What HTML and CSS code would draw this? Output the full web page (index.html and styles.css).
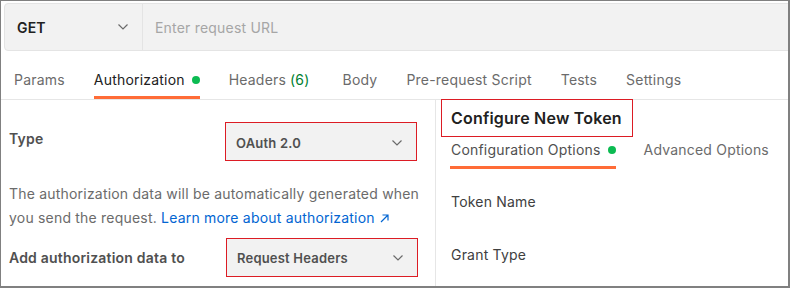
FILE: index.html
```html
<!DOCTYPE html>
<html lang="en">
<head>
  <meta charset="UTF-8" />
  <meta name="viewport" content="width=device-width, initial-scale=1.0"/>
  <title>Request | Authorization</title>
  <link rel="stylesheet" href="styles.css">
</head>
<body>

<div class="frame">
  <div class="url-bar">
    <div class="method">
      <span>GET</span>
      <svg class="chevron" width="10" height="6" viewBox="0 0 10 6"><path d="M0.5 0.5l4.5 4.5 4.5-4.5" fill="none" stroke="#6b6b6b" stroke-width="1.2"/></svg>
    </div>
    <div class="url">Enter request URL</div>
  </div>

  <nav class="tabs">
    <a class="tab">Params</a>
    <a class="tab active">Authorization <span class="dot"></span></a>
    <a class="tab">Headers <span class="count">(6)</span></a>
    <a class="tab">Body</a>
    <a class="tab">Pre-request Script</a>
    <a class="tab">Tests</a>
    <a class="tab">Settings</a>
  </nav>

  <div class="panels">
    <section class="auth">
      <div class="row row-type">
        <label class="label">Type</label>
        <div class="select">
          <span>OAuth 2.0</span>
          <svg class="chevron" width="10" height="6" viewBox="0 0 10 6"><path d="M0.5 0.5l4.5 4.5 4.5-4.5" fill="none" stroke="#6b6b6b" stroke-width="1.2"/></svg>
        </div>
      </div>

      <p class="note">The authorization data will be automatically generated when you send the request. <a class="learn">Learn more about authorization<svg width="9" height="9" viewBox="0 0 9 9"><path d="M1 8L8 1M2.5 1H8v5.5" fill="none" stroke="#0265d2" stroke-width="1.2"/></svg></a></p>

      <div class="row row-add">
        <label class="label">Add authorization data to</label>
        <div class="select select-add">
          <span>Request Headers</span>
          <svg class="chevron" width="10" height="6" viewBox="0 0 10 6"><path d="M0.5 0.5l4.5 4.5 4.5-4.5" fill="none" stroke="#6b6b6b" stroke-width="1.2"/></svg>
        </div>
      </div>
    </section>

    <section class="token">
      <h2 class="token-title">Configure New Token</h2>
      <div class="subtabs">
        <a class="subtab active">Configuration Options <span class="dot"></span></a>
        <a class="subtab">Advanced Options</a>
      </div>
      <div class="fields">
        <div class="field">Token Name</div>
        <div class="field">Grant Type</div>
      </div>
    </section>
  </div>
</div>

</body>
</html>
```

FILE: styles.css
```css
body {
  margin: 0;
  font-family: Inter, 'Noto Sans', sans-serif;
  font-size: 14px;
  letter-spacing: 0.2px;
  color: #212121;
  background-color: #fff;
}

.frame {
  width: 790px;
  height: 288px;
  box-sizing: border-box;
  border: 1px solid #808080;
  border-right-width: 2px;
  border-bottom-width: 2px;
  overflow: hidden;
}

/* request url bar */
.url-bar {
  display: flex;
  height: 48px;
  box-sizing: border-box;
  margin: 2px -10px 0 3px;
  background-color: #f2f2f2;
  border: 1px solid #e4e4e4;
  border-radius: 4px;
}

.method {
  width: 138px;
  box-sizing: border-box;
  display: flex;
  align-items: center;
  justify-content: space-between;
  padding: 0 14px 0 12px;
  border-right: 1px solid #e4e4e4;
  font-weight: 600;
}

.url {
  display: flex;
  align-items: center;
  padding-left: 12px;
  color: #a6a6a6;
}

/* request tabs */
.tabs {
  display: flex;
  gap: 29px;
  height: 49px;
  box-sizing: border-box;
  padding-left: 13px;
  border-bottom: 1px solid #e6e6e6;
}

.tab {
  display: flex;
  align-items: center;
  padding: 19px 0 6px;
  height: 20px;
  line-height: 20px;
  border-bottom: 3px solid transparent;
  color: #6b6b6b;
}

.tab.active {
  color: #212121;
  border-bottom-color: #ff6c37;
}

.count {
  color: #007f31;
  margin: 0 4px 0 4px;
}

.dot {
  display: inline-block;
  width: 8px;
  height: 8px;
  margin-left: 7px;
  border-radius: 50%;
  background-color: #0cbb52;
}

/* panels */
.panels {
  display: flex;
}

.auth {
  width: 435px;
  height: 187px;
  box-sizing: border-box;
  padding: 22px 0 0 8px;
  border-right: 1px solid #e6e6e6;
}

.row {
  display: flex;
}

.row-type {
  align-items: flex-start;
}

.row-add {
  align-items: center;
  margin-top: 8px;
}

.label {
  width: 216px;
  line-height: 20px;
  font-weight: 600;
  color: #505050;
}

.row-type .label {
  margin-top: 7px;
}

.select {
  width: 192px;
  height: 39px;
  box-sizing: border-box;
  display: flex;
  align-items: center;
  justify-content: space-between;
  padding: 2px 14px 0 10px;
  background-color: #f2f2f2;
  border: 1px solid #dc1c24; /* red highlight */
  font-size: 13px;
  font-weight: 600;
  color: #505050;
}

.select-add {
  margin-left: 1px;
  padding-top: 0;
}

.note {
  margin: 21px 0 0;
  line-height: 24px;
  color: #6b6b6b;
}

.learn {
  color: #0265d2;
}

.learn svg {
  margin-left: 5px;
}

.token {
  flex: 1;
  margin-top: -1px;
  padding-left: 5px;
}

.token-title {
  display: inline-block;
  height: 38px;
  box-sizing: border-box;
  margin: 0;
  padding: 0 10px 0 9px;
  line-height: 36px;
  font-size: 16px;
  font-weight: 600;
  color: #212121;
  border: 1px solid #dc1c24; /* red highlight */
}

.subtabs {
  display: flex;
  gap: 27px;
  margin-left: 9px;
}

.subtab {
  display: flex;
  align-items: center;
  height: 20px;
  line-height: 20px;
  padding: 3px 0 6px 1px;
  border-bottom: 3px solid transparent;
  color: #6b6b6b;
}

.subtab.active {
  color: #505050;
  border-bottom-color: #ff6c37;
}

.fields {
  display: flex;
  flex-direction: column;
  gap: 33px;
  margin-top: 23px;
  padding-left: 10px;
}

.field {
  line-height: 20px;
  color: #404040;
}
```
